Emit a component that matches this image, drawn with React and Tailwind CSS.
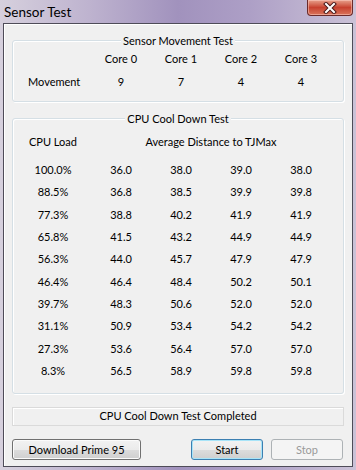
import React from 'react'

const cores = ['Core 0', 'Core 1', 'Core 2', 'Core 3']
const movement = [9, 7, 4, 4]

const coolDown = [
  ['100.0%', '36.0', '38.0', '39.0', '38.0'],
  ['88.5%', '36.8', '38.5', '39.9', '39.8'],
  ['77.3%', '38.8', '40.2', '41.9', '41.9'],
  ['65.8%', '41.5', '43.2', '44.9', '44.9'],
  ['56.3%', '44.0', '45.7', '47.9', '47.9'],
  ['46.4%', '46.4', '48.4', '50.2', '50.1'],
  ['39.7%', '48.3', '50.6', '52.0', '52.0'],
  ['31.1%', '50.9', '53.4', '54.2', '54.2'],
  ['27.3%', '53.6', '56.4', '57.0', '57.0'],
  ['8.3%', '56.5', '58.9', '59.8', '59.8'],
]

function GroupBox({ title, className, children }) {
  return (
    <div className={`relative rounded-[3px] border border-[#d5dfe5] shadow-[inset_1px_1px_0_#ffffff,1px_1px_0_#ffffff] ${className}`}>
      <div className="absolute -top-[8px] left-0 right-0 flex justify-center">
        <span className="bg-[#f0f0f0] px-[2px] leading-[15px]">{title}</span>
      </div>
      {children}
    </div>
  )
}

function CloseButton() {
  return (
    <div className="mr-[3px] w-[46px] h-[16px] rounded-b-[4px] border border-t-0 border-[#6b2a2a] bg-gradient-to-b from-[#e6a08c] via-[#c7412f] to-[#d9735a] shadow-[inset_0_0_0_1px_rgba(255,210,200,0.5)] flex items-center justify-center">
      <svg width="14" height="12" viewBox="0 0 14 12">
        <path d="M3 2 L11 10 M11 2 L3 10" stroke="#4a1a1a" strokeWidth="4" strokeLinecap="square" />
        <path d="M3 2 L11 10 M11 2 L3 10" stroke="#ffffff" strokeWidth="2" strokeLinecap="square" />
      </svg>
    </div>
  )
}

function Button({ kind, className, children }) {
  const styles = {
    normal: 'border-[#707070] bg-[linear-gradient(#f2f2f2_0%,#ebebeb_50%,#dddddd_51%,#cfcfcf_100%)] text-black shadow-[inset_0_0_0_1px_#fbfbfb]',
    default: 'border-[#3c7fb1] bg-[linear-gradient(#f2f2f2_0%,#ebebeb_50%,#dddddd_51%,#cfcfcf_100%)] text-black shadow-[inset_0_0_0_1px_#a8e4f8]',
    disabled: 'border-[#adb2b5] bg-[#f4f4f4] text-[#9a9a9a]',
  }
  return (
    <button className={`h-[21px] rounded-[3px] border flex items-center justify-center leading-none ${styles[kind]} ${className}`}>
      {children}
    </button>
  )
}

export default function App() {
  return (
    <div className="w-[356px] h-[470px] overflow-hidden flex flex-col bg-[linear-gradient(90deg,#d6d0dd_0%,#beb3cf_25%,#a192bd_50%,#ad9fc6_70%,#cbc2d7_100%)] font-['Lato','Liberation_Sans',sans-serif] text-[11px] text-black">
      {/* Title bar */}
      <div className="h-[23px] flex items-start justify-between">
        <span className="pl-[4px] leading-[24px] text-[13.5px]">Sensor Test</span>
        <CloseButton />
      </div>

      {/* Client area */}
      <div className="mx-[3px] h-[444px] border border-[#4e4c58] bg-[#f0f0f0] shadow-[inset_1px_1px_0_#ffffff] px-[8px] pt-[16px] flex flex-col">
        <GroupBox title="Sensor Movement Test" className="h-[62px] pt-[7px]">
          <div className="grid grid-cols-[78px_60px_60px_60px_60px]">
            <div className="h-[23px]" />
            {cores.map((c) => (
              <div key={c} className="h-[23px] flex items-center justify-center">{c}</div>
            ))}
            <div className="h-[23px] flex items-center pl-[15px]">Movement</div>
            {movement.map((m, i) => (
              <div key={i} className="h-[23px] flex items-center justify-center">{m}</div>
            ))}
          </div>
        </GroupBox>

        <GroupBox title="CPU Cool Down Test" className="mt-[16px] h-[276px] pt-[12px]">
          <div className="grid grid-cols-[78px_60px_60px_60px_60px]">
            <div className="h-[22px] pl-[2px] flex items-center justify-center">CPU Load</div>
            <div className="col-span-4 h-[22px] flex items-center justify-center">Average Distance to TJMax</div>
          </div>
          <div className="mt-[6px] grid grid-cols-[78px_60px_60px_60px_60px]">
            {coolDown.map((row) =>
              row.map((v, i) => (
                <div key={row[0] + i} className={`h-[22.33px] flex items-center justify-center ${i === 0 ? 'pl-[2px]' : ''}`}>
                  {v}
                </div>
              ))
            )}
          </div>
        </GroupBox>

        <div className="mt-[13px] h-[19px] border border-[#dadada] shadow-[inset_1px_1px_0_#ffffff] flex items-center justify-center">
          CPU Cool Down Test Completed
        </div>

        <div className="mt-[13px] flex items-center">
          <Button kind="normal" className="w-[129px]">Download Prime 95</Button>
          <div className="flex-1" />
          <Button kind="default" className="w-[72px]">Start</Button>
          <Button kind="disabled" className="ml-[8px] mr-[1px] w-[72px]">Stop</Button>
        </div>
      </div>
    </div>
  )
}
